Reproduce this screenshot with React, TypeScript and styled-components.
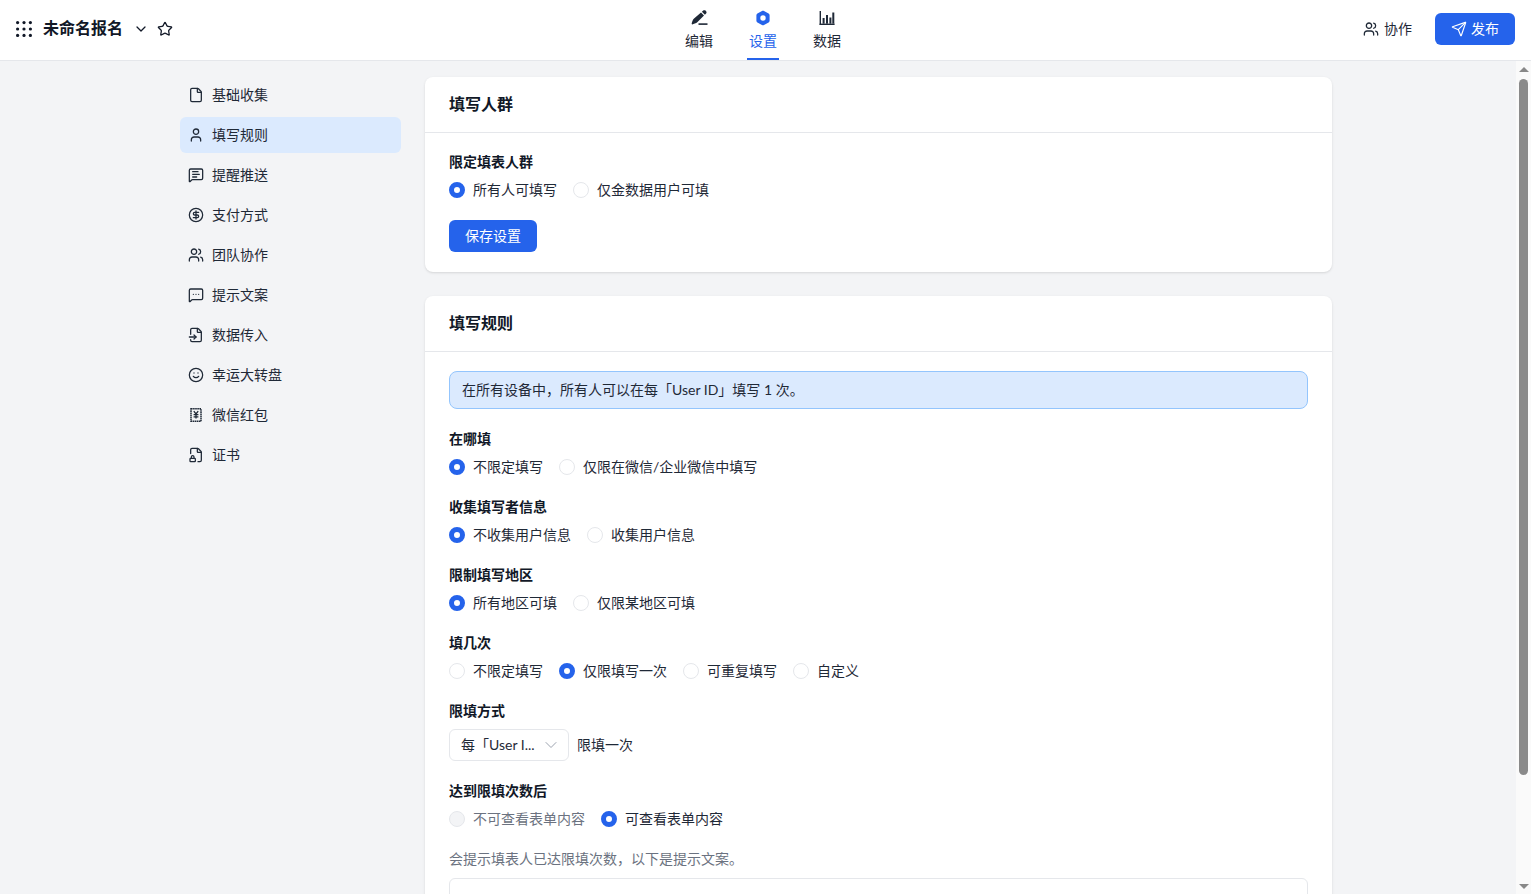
import React from "react";
import styled, {createGlobalStyle} from "styled-components";
import {
    ChevronDown,
    CircleDollarSign,
    File,
    FileInput,
    FileLock2,
    MessageSquareMore,
    MessageSquareText,
    Send,
    Smile,
    Star,
    User,
    Users,
} from "lucide-react";

const GlobalStyle = createGlobalStyle`
  html, body {
    margin: 0;
    padding: 0;
    height: 100%;
    overflow: hidden;
    background: #f3f4f6;
  }

  * {
    box-sizing: border-box;
  }

  body {
    font-family: "Lato", "Noto Sans CJK SC", "Noto Sans", sans-serif;
    font-size: 14px;
    line-height: 22px;
    color: #1f2937;
  }
`;

const GridIcon = () => (
    <svg width="16" height="16" viewBox="0 0 16 16" fill="currentColor">
        {[1.6, 8, 14.4].map((y) => [1.6, 8, 14.4].map((x) => (
            <circle key={`${x}-${y}`} cx={x} cy={y} r="1.6"/>
        )))}
    </svg>
);

const BillIcon = () => (
    <svg width="16" height="16" viewBox="0 0 16 16" fill="none" stroke="currentColor" strokeWidth="1.5">
        <path d="M3 1.7h10v12.6H3z" strokeDasharray="1.6 0.5"/>
        <path d="M5.8 4.2 8 7l2.2-2.8M5.6 7.6h4.8M5.6 9.8h4.8M8 7v4.6" strokeWidth="1.3"/>
    </svg>
);

const PenIcon = () => (
    <svg width="18" height="16" viewBox="0 0 18 16" fill="currentColor">
        <path d="M13.2.6c.7-.6 1.700-.6 2.300 0l.6.6c.6.6.6 1.700 0 2.300l-1.200 1.200-3-3z"/>
        <path d="M11 2.600 14 5.600l-7 7c-.6.5-3.600 1.700-4.600 1.800-.6 0-.8-.2-.7-.8.1-1 1.300-4 1.800-4.500z"/>
        <rect x="8.500" y="13.300" width="9" height="1.600"/>
    </svg>
);

const HexIcon = () => (
    <svg width="16" height="16" viewBox="0 0 16 16">
        <path
            fillRule="evenodd"
            fill="currentColor"
            d="M7 .9c.6-.35 1.400-.35 2 0l4.600 2.600c.6.35 1 1 1 1.700v5.600c0 .7-.4 1.350-1 1.700L9 15.100c-.6.35-1.400.35-2 0l-4.600-2.600c-.6-.35-1-1-1-1.700V5.200c0-.7.4-1.350 1-1.700zM8 5.300a2.700 2.700 0 1 0 0 5.400 2.700 2.700 0 0 0 0-5.400z"
        />
    </svg>
);

const ChartIcon = () => (
    <svg width="16" height="16" viewBox="0 0 16 16" fill="currentColor">
        <rect x="0.600" y="1" width="1.400" height="14"/>
        <rect x="0.600" y="13.600" width="15" height="1.400"/>
        <rect x="3.600" y="8" width="2" height="5.700"/>
        <rect x="7" y="5" width="2" height="8.700"/>
        <rect x="10.400" y="7.500" width="2" height="6.200"/>
        <rect x="13.300" y="2.500" width="2" height="11.200"/>
    </svg>
);

const sideStroke = 1.9;

const sideItems = [
    {label: "基础收集", icon: <File size={16} strokeWidth={sideStroke}/>},
    {label: "填写规则", icon: <User size={16} strokeWidth={sideStroke}/>, active: true},
    {label: "提醒推送", icon: <MessageSquareText size={16} strokeWidth={sideStroke}/>},
    {label: "支付方式", icon: <CircleDollarSign size={16} strokeWidth={sideStroke}/>},
    {label: "团队协作", icon: <Users size={16} strokeWidth={sideStroke}/>},
    {label: "提示文案", icon: <MessageSquareMore size={16} strokeWidth={sideStroke}/>},
    {label: "数据传入", icon: <FileInput size={16} strokeWidth={sideStroke}/>},
    {label: "幸运大转盘", icon: <Smile size={16} strokeWidth={sideStroke}/>},
    {label: "微信红包", icon: <BillIcon/>},
    {label: "证书", icon: <FileLock2 size={16} strokeWidth={sideStroke}/>},
];

const tabs = [
    {label: "编辑", icon: <PenIcon/>},
    {label: "设置", icon: <HexIcon/>, active: true},
    {label: "数据", icon: <ChartIcon/>},
];

type Option = { label: string, checked?: boolean, disabled?: boolean };

const ruleGroups: { title: string, options: Option[] }[] = [
    {title: "在哪填", options: [{label: "不限定填写", checked: true}, {label: "仅限在微信/企业微信中填写"}]},
    {title: "收集填写者信息", options: [{label: "不收集用户信息", checked: true}, {label: "收集用户信息"}]},
    {title: "限制填写地区", options: [{label: "所有地区可填", checked: true}, {label: "仅限某地区可填"}]},
    {
        title: "填几次",
        options: [
            {label: "不限定填写"},
            {label: "仅限填写一次", checked: true},
            {label: "可重复填写"},
            {label: "自定义"},
        ]
    },
];

const RadioGroup = ({options}: { options: Option[] }) => (
    <RadioRow>
        {options.map((option) => (
            <RadioLabel key={option.label} $disabled={option.disabled}>
                <RadioDot $checked={option.checked} $disabled={option.disabled}/>
                {option.label}
            </RadioLabel>
        ))}
    </RadioRow>
);

export default function App() {
    return (
        <>
            <GlobalStyle/>
            <Page>
                <Header>
                    <HeaderLeft>
                        <GripButton><GridIcon/></GripButton>
                        <FormName>未命名报名</FormName>
                        <ChevronDown size={16} strokeWidth={1.9}/>
                        <FavIcon><Star size={16} strokeWidth={1.9}/></FavIcon>
                    </HeaderLeft>
                    <Tabs>
                        {tabs.map((tab) => (
                            <Tab key={tab.label} $active={tab.active}>
                                <TabIcon>{tab.icon}</TabIcon>
                                {tab.label}
                            </Tab>
                        ))}
                    </Tabs>
                    <HeaderRight>
                        <CollabButton><Users size={16} strokeWidth={1.9}/>协作</CollabButton>
                        <PublishButton><Send size={16} strokeWidth={1.7}/>发布</PublishButton>
                    </HeaderRight>
                </Header>
                <Content>
                    <Sidebar>
                        {sideItems.map((item) => (
                            <SideItem key={item.label} $active={item.active}>
                                {item.icon}
                                {item.label}
                            </SideItem>
                        ))}
                    </Sidebar>
                    <Main>
                        <Card>
                            <CardHeader>填写人群</CardHeader>
                            <CardBody>
                                <Field>
                                    <FieldTitle>限定填表人群</FieldTitle>
                                    <RadioGroup options={[{label: "所有人可填写", checked: true}, {label: "仅金数据用户可填"}]}/>
                                </Field>
                                <SaveButton>保存设置</SaveButton>
                            </CardBody>
                        </Card>
                        <Card>
                            <CardHeader>填写规则</CardHeader>
                            <RuleBody>
                                <Notice>在所有设备中，所有人可以在每「User ID」填写 1 次。</Notice>
                                {ruleGroups.map((group) => (
                                    <Field key={group.title}>
                                        <FieldTitle>{group.title}</FieldTitle>
                                        <RadioGroup options={group.options}/>
                                    </Field>
                                ))}
                                <Field>
                                    <FieldTitle>限填方式</FieldTitle>
                                    <SelectRow>
                                        <Select>
                                            每「User I...
                                            <ChevronDown size={20} strokeWidth={1.2} color="#9ca3af"/>
                                        </Select>
                                        限填一次
                                    </SelectRow>
                                </Field>
                                <Field>
                                    <FieldTitle>达到限填次数后</FieldTitle>
                                    <RadioGroup
                                        options={[{label: "不可查看表单内容", disabled: true}, {label: "可查看表单内容", checked: true}]}/>
                                </Field>
                                <Hint>会提示填表人已达限填次数，以下是提示文案。</Hint>
                                <TextBox/>
                            </RuleBody>
                        </Card>
                    </Main>
                </Content>
                <ScrollTrack>
                    <ScrollArrow/>
                    <ScrollThumb/>
                    <ScrollArrow $down/>
                </ScrollTrack>
            </Page>
        </>
    );
}

const Page = styled.div`
  position: relative;
  height: 894px;
  overflow: hidden;
  background: #f3f4f6;
`;

const Header = styled.header`
  display: flex;
  align-items: stretch;
  height: 61px;
  padding: 0 16px 0 15px;
  background: #fff;
  border-bottom: 1px solid #e5e7eb;
`;

const HeaderLeft = styled.div`
  display: flex;
  align-items: center;
  width: 652px;
  padding-bottom: 3px;
  color: #111827;
`;

const GripButton = styled.span`
  display: flex;
  width: 18px;
  margin-right: 10px;
  justify-content: center;
`;

const FormName = styled.span`
  font-size: 16px;
  font-weight: 700;
  margin-right: 10px;
  margin-bottom: 1px;
`;

const FavIcon = styled.span`
  display: flex;
  margin-left: 8px;
`;

const Tabs = styled.nav`
  display: flex;
  width: 192px;
`;

const Tab = styled.div<{ $active?: boolean }>`
  position: relative;
  flex: 1;
  display: flex;
  flex-direction: column;
  align-items: center;
  padding-top: 9px;
  color: ${({$active}) => ($active ? "#2563eb" : "#1f2937")};

  &::after {
    content: "";
    display: ${({$active}) => ($active ? "block" : "none")};
    position: absolute;
    left: 16px;
    right: 16px;
    bottom: 0;
    height: 2px;
    background: #2563eb;
  }
`;

const TabIcon = styled.span`
  display: flex;
  align-items: center;
  height: 18px;
  margin-bottom: 3px;
`;

const HeaderRight = styled.div`
  display: flex;
  align-items: center;
  margin-left: auto;
  padding-bottom: 2px;
`;

const CollabButton = styled.div`
  display: flex;
  align-items: center;
  gap: 5px;
  margin-right: 23px;
`;

const PublishButton = styled.div`
  display: flex;
  align-items: center;
  justify-content: center;
  gap: 4px;
  width: 80px;
  height: 32px;
  border-radius: 6px;
  background: #2563eb;
  color: #fff;
`;

const Content = styled.div`
  display: flex;
  align-items: flex-start;
  gap: 24px;
  padding: 16px 0 0 180px;
`;

const Sidebar = styled.aside`
  display: flex;
  flex-direction: column;
  gap: 4px;
  width: 221px;
  flex-shrink: 0;
`;

const SideItem = styled.div<{ $active?: boolean }>`
  display: flex;
  align-items: center;
  gap: 8px;
  height: 36px;
  padding: 0 8px;
  border-radius: 6px;
  background: ${({$active}) => ($active ? "#dbeafe" : "transparent")};
`;

const Main = styled.main`
  display: flex;
  flex-direction: column;
  gap: 24px;
  width: 907px;
`;

const Card = styled.section`
  background: #fff;
  border-radius: 8px;
  box-shadow: 0 1px 3px rgba(0, 0, 0, 0.1), 0 1px 2px -1px rgba(0, 0, 0, 0.1);
`;

const CardHeader = styled.h2`
  margin: 0;
  display: flex;
  align-items: center;
  height: 56px;
  padding: 0 24px 1px;
  border-bottom: 1px solid #e5e7eb;
  font-size: 16px;
  font-weight: 700;
  color: #111827;
`;

const CardBody = styled.div`
  padding: 18px 24px 20px;
`;

const RuleBody = styled.div`
  display: flex;
  flex-direction: column;
  gap: 18px;
  padding: 19px 24px 24px;
`;

const Field = styled.div`
  display: flex;
  flex-direction: column;
  gap: 6px;
`;

const FieldTitle = styled.div`
  font-weight: 600;
  color: #111827;
`;

const RadioRow = styled.div`
  display: flex;
  gap: 16px;
`;

const RadioLabel = styled.label<{ $disabled?: boolean }>`
  display: flex;
  align-items: center;
  gap: 8px;
  color: ${({$disabled}) => ($disabled ? "#6b7280" : "#1f2937")};
`;

const RadioDot = styled.span<{ $checked?: boolean, $disabled?: boolean }>`
  width: 16px;
  height: 16px;
  border-radius: 50%;
  border: ${({$checked}) => ($checked ? "5px solid #2563eb" : "1px solid #e5e7eb")};
  background: ${({$disabled}) => ($disabled ? "#f3f4f6" : "#fff")};
`;

const SaveButton = styled.div`
  display: flex;
  align-items: center;
  justify-content: center;
  width: 88px;
  height: 32px;
  margin-top: 19px;
  border-radius: 6px;
  background: #2563eb;
  color: #fff;
`;

const Notice = styled.div`
  display: flex;
  align-items: center;
  height: 38px;
  padding: 0 12px;
  border: 1px solid #93c5fd;
  border-radius: 8px;
  background: #dbeafe;
  margin-bottom: 1px;
`;

const SelectRow = styled.div`
  display: flex;
  align-items: center;
  gap: 8px;
  margin-top: 1px;
  margin-bottom: 1px;
`;

const Select = styled.div`
  display: flex;
  align-items: center;
  justify-content: space-between;
  width: 120px;
  height: 32px;
  padding: 0 7px 0 11px;
  border: 1px solid #e5e7eb;
  border-radius: 6px;
  white-space: nowrap;
`;

const Hint = styled.div`
  color: #6b7280;
`;

const TextBox = styled.div`
  height: 96px;
  margin-top: -10px;
  border: 1px solid #e5e7eb;
  border-radius: 6px;
`;

const ScrollTrack = styled.div`
  position: absolute;
  top: 61px;
  right: 0;
  bottom: 0;
  width: 15px;
  display: flex;
  flex-direction: column;
  align-items: center;
  background: #fafafa;
`;

const ScrollArrow = styled.span<{ $down?: boolean }>`
  width: 0;
  height: 0;
  border-left: 5px solid transparent;
  border-right: 5px solid transparent;
  ${({$down}) => ($down
          ? "border-top: 5px solid #888; margin-top: auto; margin-bottom: 5px;"
          : "border-bottom: 5px solid #888; margin-top: 6px;")}
`;

const ScrollThumb = styled.span`
  width: 9px;
  height: 696px;
  margin-top: 7px;
  border-radius: 5px;
  background: #8a8a8a;
`;
